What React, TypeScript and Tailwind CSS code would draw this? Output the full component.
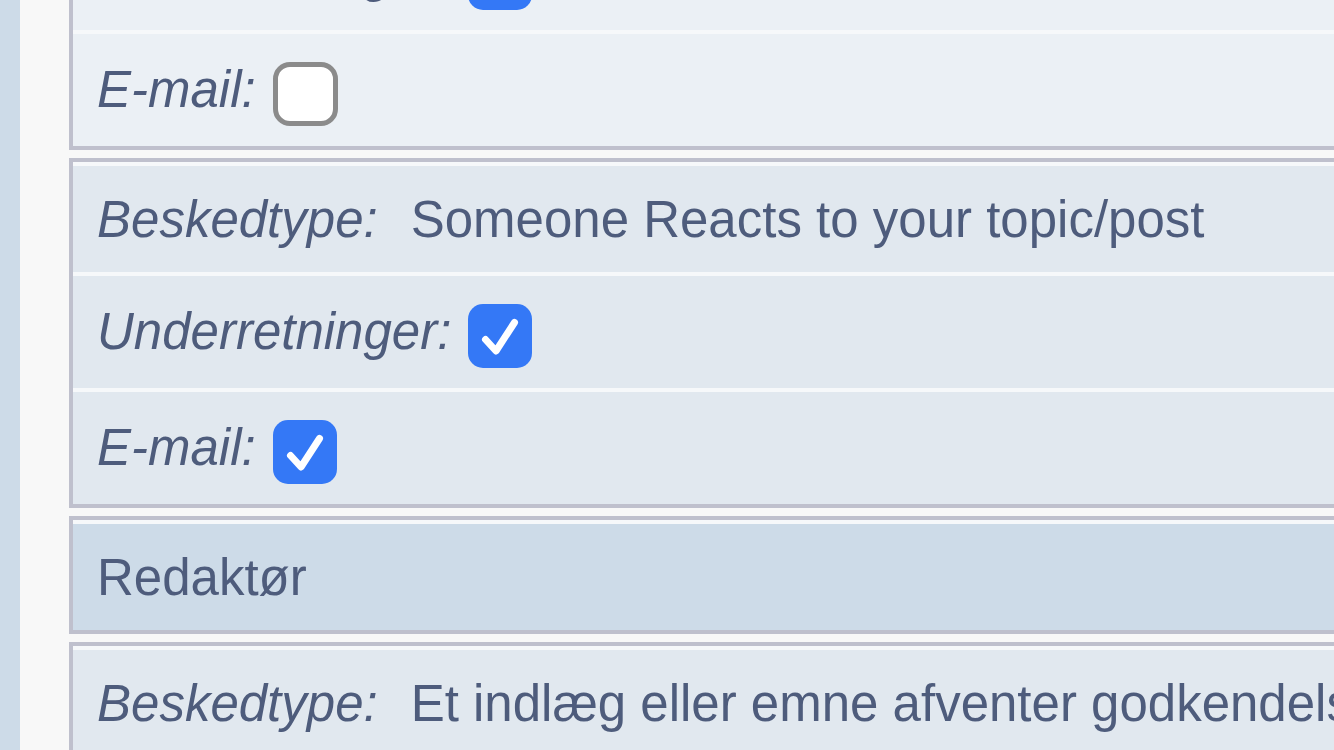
import React from 'react';

type Row = {
    kind: 'type' | 'check';
    label: string;
    value?: string;
    checked?: boolean;
};

type Group = {
    tone: 'light' | 'mid';
    rows: Row[];
};

const groupsBefore: Group[] = [
    {
        tone: 'light',
        rows: [
            { kind: 'type', label: 'Beskedtype:', value: 'Someone replied to your post' },
            { kind: 'check', label: 'Underretninger:', checked: true },
            { kind: 'check', label: 'E-mail:', checked: false },
        ],
    },
    {
        tone: 'mid',
        rows: [
            { kind: 'type', label: 'Beskedtype:', value: 'Someone Reacts to your topic/post' },
            { kind: 'check', label: 'Underretninger:', checked: true },
            { kind: 'check', label: 'E-mail:', checked: true },
        ],
    },
];

const groupsAfter: Group[] = [
    {
        tone: 'mid',
        rows: [
            { kind: 'type', label: 'Beskedtype:', value: 'Et indlæg eller emne afventer godkendelse' },
            { kind: 'check', label: 'Underretninger:', checked: true },
            { kind: 'check', label: 'E-mail:', checked: true },
        ],
    },
];

function Checkbox({ checked }: { checked: boolean }) {
    if (!checked) {
        return (
            <span className="ml-[17px] mt-[8px] inline-block h-[64px] w-[65px] shrink-0 rounded-[17px] border-[5px] border-[#8b8b8b] bg-white" />
        );
    }
    return (
        <span className="ml-[17px] mt-[8px] flex h-[64px] w-[64px] shrink-0 items-center justify-center rounded-[15px] bg-[#3478f6]">
            <svg width="64" height="64" viewBox="0 0 64 64" fill="none">
                <path
                    d="M17.5 35.5 L28 47 L46.5 18.5"
                    stroke="white"
                    strokeWidth="7"
                    strokeLinecap="round"
                    strokeLinejoin="round"
                />
            </svg>
        </span>
    );
}

function SettingsBox({ group }: { group: Group }) {
    const bg = group.tone === 'light' ? 'bg-[#ebf0f5]' : 'bg-[#e1e8ef]';
    return (
        <div className="border-4 border-[#bfc0cd]">
            {group.rows.map((row, i) => (
                <div
                    key={i}
                    className={`flex items-center whitespace-nowrap border-t-4 border-t-[#f6f8fa] pl-[24px] ${bg} ${
                        i === 0 ? 'h-[110px] pt-[3px]' : 'h-[116px]'
                    }`}
                >
                    <span className="italic">{row.label}</span>
                    {row.kind === 'type' ? (
                        <span className="ml-[33px]">{row.value}</span>
                    ) : (
                        <Checkbox checked={!!row.checked} />
                    )}
                </div>
            ))}
        </div>
    );
}

export default function App() {
    return (
        <div
            className="flex h-[750px] w-[1334px] overflow-hidden bg-[#f8f8f8] text-[51px] leading-normal text-[#4e5c7c]"
            style={{ fontFamily: '"Liberation Sans", Arial, sans-serif' }}
        >
            <div className="w-[20px] shrink-0 bg-[#cddbe8]" />
            <div className="-mr-[40px] flex-1 pl-[49px]">
                <div className="-mt-[200px] flex flex-col gap-[8px]">
                    {groupsBefore.map((g, i) => (
                        <SettingsBox key={i} group={g} />
                    ))}

                    <div className="border-4 border-[#bfc0cd]">
                        <div className="flex h-[110px] items-center border-t-4 border-t-[#f6f8fa] bg-[#cddbe8] pl-[24px] pt-[3px]">
                            Redaktør
                        </div>
                    </div>

                    {groupsAfter.map((g, i) => (
                        <SettingsBox key={i} group={g} />
                    ))}
                </div>
            </div>
        </div>
    );
}
